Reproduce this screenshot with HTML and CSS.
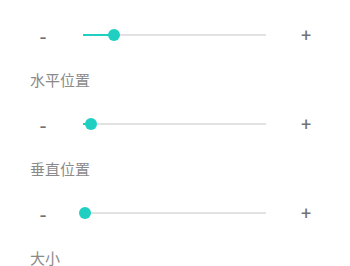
FILE: index.html
```html
<!DOCTYPE html>
<html lang="zh">
<head>
  <meta charset="UTF-8">
  <meta name="viewport" content="width=device-width, initial-scale=1.0">
  <title>位置与大小</title>
  <link rel="stylesheet" href="styles.css">
</head>
<body>
  <div class="panel">
    <div class="setting">
      <div class="slider-row">
        <span class="btn-step minus">-</span>
        <div class="track">
          <div class="track-fill" style="width: 17%"></div>
          <div class="thumb" style="left: 17%"></div>
        </div>
        <span class="btn-step plus">+</span>
      </div>
      <p class="label">水平位置</p>
    </div>

    <div class="setting">
      <div class="slider-row">
        <span class="btn-step minus">-</span>
        <div class="track">
          <div class="track-fill" style="width: 4.5%"></div>
          <div class="thumb" style="left: 4.5%"></div>
        </div>
        <span class="btn-step plus">+</span>
      </div>
      <p class="label">垂直位置</p>
    </div>

    <div class="setting">
      <div class="slider-row">
        <span class="btn-step minus">-</span>
        <div class="track">
          <div class="track-fill" style="width: 1%"></div>
          <div class="thumb" style="left: 1%"></div>
        </div>
        <span class="btn-step plus">+</span>
      </div>
      <p class="label">大小</p>
    </div>
  </div>
</body>
</html>
```

FILE: styles.css
```css
html {
  background-color: #ffffff;
}
body {
  margin: 0;
  font-family: "Noto Sans", "Noto Sans CJK SC", sans-serif;
  color: #888888;
}
.panel {
  padding-top: 13px;
}
.slider-row {
  display: grid;
  grid-template-columns: 26px 1fr 26px;
  column-gap: 27px;
  align-items: center;
  height: 44px;
  padding: 0 31px 0 30px;
}
.btn-step {
  text-align: center;
  font-family: Roboto, sans-serif;
  line-height: 20px;
  color: #727272;
}
.btn-step.minus {
  font-size: 22px;
  padding-top: 5px;
}
.btn-step.plus {
  font-size: 18px;
  padding-top: 1px;
}
.track {
  position: relative;
  height: 2px;
  background-color: #e2e2e2;
}
.track-fill {
  height: 100%;
  background-color: #1fcfc1;
}
.thumb {
  position: absolute;
  top: 50%;
  width: 12px;
  height: 12px;
  border-radius: 50%;
  background-color: #1fcfc1;
  transform: translate(-50%, -50%);
}
.label {
  margin: 0;
  padding: 15px 0 14px 30px;
  font-family: "Noto Sans CJK SC", sans-serif;
  font-size: 15px;
  line-height: 16px;
  color: #8a8a8a;
}
.setting:last-child .label {
  padding-bottom: 0;
}
```
